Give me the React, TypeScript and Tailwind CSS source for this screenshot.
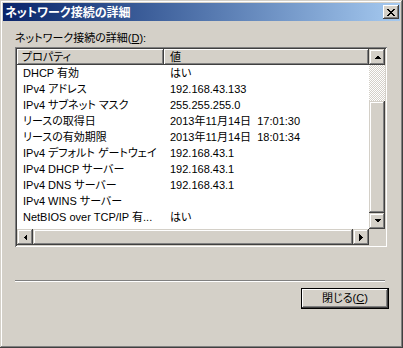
import React from "react";

const rows: [string, string][] = [
  ["DHCP 有効", "はい"],
  ["IPv4 アドレス", "192.168.43.133"],
  ["IPv4 サブネット マスク", "255.255.255.0"],
  ["リースの取得日", "2013年11月14日  17:01:30"],
  ["リースの有効期限", "2013年11月14日  18:01:34"],
  ["IPv4 デフォルト ゲートウェイ", "192.168.43.1"],
  ["IPv4 DHCP サーバー", "192.168.43.1"],
  ["IPv4 DNS サーバー", "192.168.43.1"],
  ["IPv4 WINS サーバー", ""],
  ["NetBIOS over TCP/IP 有...", "はい"],
];

function Arrow({ dir }: { dir: "up" | "down" | "left" | "right" }) {
  const pts =
    dir === "up"
      ? "0,4 7,4 3.5,0.5"
      : dir === "down"
      ? "0,0 7,0 3.5,3.5"
      : dir === "left"
      ? "4,0 4,7 0.5,3.5"
      : "0,0 0,7 3.5,3.5";
  const w = dir === "up" || dir === "down" ? 7 : 4;
  const h = dir === "up" || dir === "down" ? 4 : 7;
  return (
    <svg width={w} height={h} viewBox={`0 0 ${w} ${h}`} shapeRendering="crispEdges">
      <polygon points={pts} fill="#000" />
    </svg>
  );
}

function SBtn({ dir }: { dir: "up" | "down" | "left" | "right" }) {
  return (
    <div className="w-[16px] h-[16px] shrink-0 bg-[#d4d0c8] flex items-center justify-center shadow-[inset_-1px_-1px_#404040,inset_1px_1px_#d4d0c8,inset_-2px_-2px_#808080,inset_2px_2px_#ffffff]">
      <Arrow dir={dir} />
    </div>
  );
}

export default function App() {
  return (
    <div className="w-[403px] h-[348px] bg-[#d4d0c8] p-[3px] flex flex-col overflow-hidden font-['Liberation_Sans','Noto_Sans_CJK_JP',sans-serif] [font-feature-settings:'palt'] text-black shadow-[inset_-1px_-1px_#404040,inset_1px_1px_#d4d0c8,inset_-2px_-2px_#808080,inset_2px_2px_#ffffff]">
      {/* Title bar */}
      <div className="h-[18px] shrink-0 flex items-center justify-between bg-linear-to-r from-[#0a246a] to-[#a6caf0] pl-[2px] pr-[1px]">
        <span className="text-white font-bold text-[12px] leading-[18px] font-['Noto_Sans_CJK_JP',sans-serif]">
          ネットワーク接続の詳細
        </span>
        <div className="w-[16px] h-[14px] bg-[#d4d0c8] flex items-center justify-center shadow-[inset_-1px_-1px_#404040,inset_1px_1px_#ffffff,inset_-2px_-2px_#808080,inset_2px_2px_#d4d0c8]">
          <svg width="8" height="7" viewBox="0 0 8 7" shapeRendering="crispEdges">
            <path d="M0 0h2v1h-2zM6 0h2v1h-2zM1 1h2v1h-2zM5 1h2v1h-2zM2 2h4v1h-4zM3 3h2v1h-2zM2 4h4v1h-4zM1 5h2v1h-2zM5 5h2v1h-2zM0 6h2v1h-2zM6 6h2v1h-2z" fill="#000" />
          </svg>
        </div>
      </div>

      {/* Content */}
      <div className="flex flex-col pl-[12px]">
        <div className="mt-[10px] h-[14px] text-[11px] leading-[14px] pl-[0px]">
          ネットワーク接続の詳細(<span className="underline">D</span>):
        </div>

        {/* List view */}
        <div className="mt-[2px] w-[372px] h-[200px] p-[2px] bg-white shadow-[inset_1px_1px_#808080,inset_-1px_-1px_#ffffff,inset_2px_2px_#404040,inset_-2px_-2px_#d4d0c8] flex flex-col">
          <div className="flex h-[180px]">
            <div className="flex-1 flex flex-col overflow-hidden">
              {/* header */}
              <div className="flex h-[16px] shrink-0 text-[11px] leading-[16px]">
                <div className="w-[147px] bg-[#d4d0c8] pl-[5px] shadow-[inset_-1px_-1px_#404040,inset_1px_1px_#ffffff,inset_-2px_-2px_#808080]">
                  プロパティ
                </div>
                <div className="flex-1 bg-[#d4d0c8] pl-[6px] shadow-[inset_-1px_-1px_#404040,inset_1px_1px_#ffffff,inset_-2px_-2px_#808080]">
                  値
                </div>
              </div>
              {rows.map(([k, v]) => (
                <div key={k} className="flex h-[16px] shrink-0 text-[11px] leading-[16px]">
                  <div className="w-[147px] pl-[6px] whitespace-nowrap overflow-hidden">{k}</div>
                  <div className="flex-1 pl-[6px] whitespace-pre">{v}</div>
                </div>
              ))}
            </div>
            {/* vertical scrollbar */}
            <div className="w-[16px] flex flex-col">
              <SBtn dir="up" />
              <div className="h-[36px] bg-[image:repeating-conic-gradient(#d4d0c8_0_25%,#ffffff_0_50%)] bg-[length:2px_2px]" />
              <div className="flex-1 bg-[#d4d0c8] shadow-[inset_-1px_-1px_#404040,inset_1px_1px_#d4d0c8,inset_-2px_-2px_#808080,inset_2px_2px_#ffffff]" />
              <SBtn dir="down" />
            </div>
          </div>
          {/* horizontal scrollbar */}
          <div className="flex h-[16px]">
            <SBtn dir="left" />
            <div className="flex-1 bg-[#d4d0c8] shadow-[inset_-1px_-1px_#404040,inset_1px_1px_#d4d0c8,inset_-2px_-2px_#808080,inset_2px_2px_#ffffff]" />
            <SBtn dir="right" />
            <div className="w-[16px] bg-[#d4d0c8]" />
          </div>
        </div>

        {/* separator */}
        <div className="mt-[33px] w-[370px] h-[2px] border-t border-t-[#808080] border-b border-b-[#ffffff]" />

        {/* close button */}
        <div className="mt-[6px] flex justify-end pr-[11px]">
          <div className="w-[88px] h-[21px] border border-black bg-[#d4d0c8] flex items-center justify-center text-[11px] shadow-[inset_-1px_-1px_#404040,inset_1px_1px_#ffffff,inset_-2px_-2px_#808080]">
            閉じる(<span className="underline">C</span>)
          </div>
        </div>
      </div>
    </div>
  );
}
